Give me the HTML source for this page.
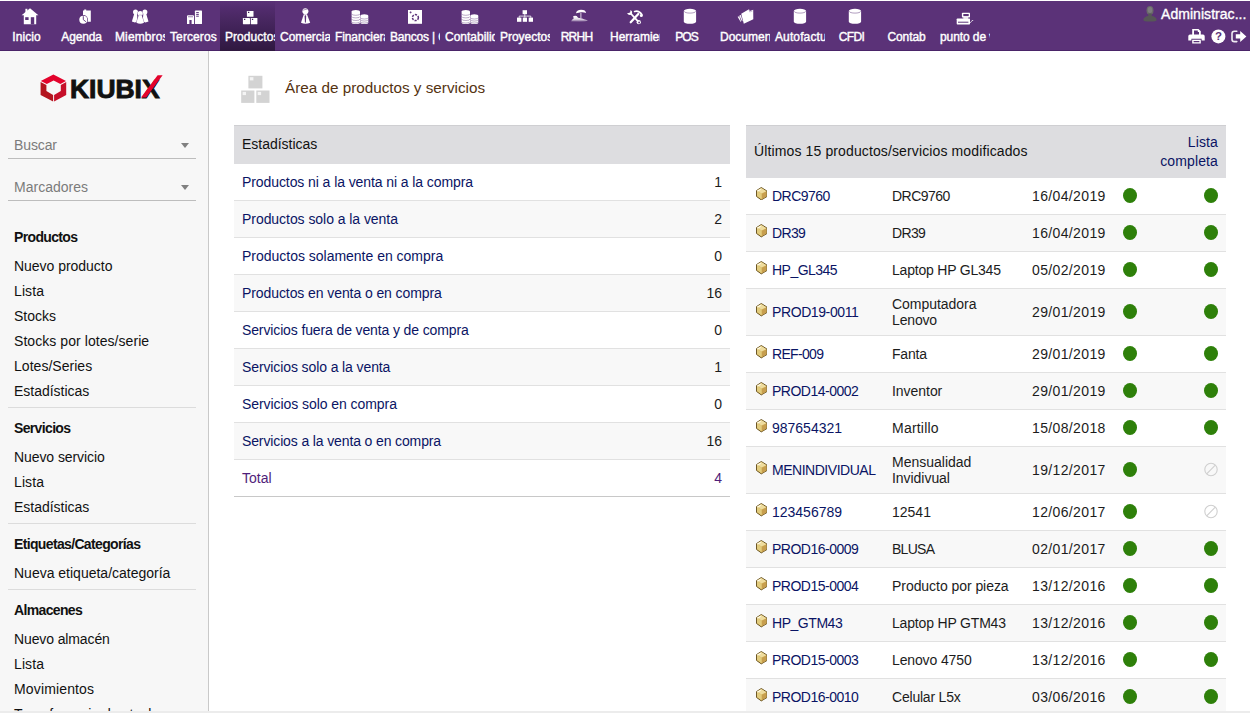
<!DOCTYPE html>
<html lang="es">
<head>
<meta charset="utf-8">
<title>Área de productos y servicios</title>
<style>
*{box-sizing:border-box}
html,body{margin:0;padding:0}
body{width:1250px;height:713px;overflow:hidden;background:#fff;position:relative;font-family:"Liberation Sans",sans-serif;font-size:14px;color:#1c1c1c}
a{text-decoration:none;color:#0a1464}
.ab{position:absolute}
#top{position:absolute;left:0;top:1px;width:1250px;height:50px;background:#5b3278;border-bottom:1px solid #4a2468}
#top ul{list-style:none;margin:0;padding:0;position:absolute;left:0;top:0;height:49px}
#top li{position:absolute;top:0;width:55px;height:50px;overflow:hidden}
#top li.sel{background:linear-gradient(#593076 0,#593076 2%,#522c6e 14%,#47265f 40%,#3b1f51 70%,#2f183f 100%)}
#top li svg{position:absolute;left:0;top:0}
#top li a{position:absolute;left:5px;top:28px;width:43px;height:16px;line-height:16px;font-size:12px;color:#fff;white-space:nowrap;text-align:center;-webkit-text-stroke:.4px #fff}
#login{position:absolute;left:1130px;top:0;width:120px;height:49px;color:#fff}
#login .usr{position:absolute;left:31px;top:4px;font-size:14px;line-height:18px;white-space:nowrap;color:#fff;-webkit-text-stroke:.35px #fff}
#side{position:absolute;left:0;top:51px;width:209px;height:660px;background:#f7f7f7;border-right:1px solid #c9c9c9;overflow:hidden}
#side .sel{position:absolute;left:8px;width:188px;height:30px;border-bottom:1px solid #bdbdbd;color:#7b7b7b;font-size:14px}
#side .sel span{position:absolute;left:6px;top:7px;line-height:18px}
#side .sel i{position:absolute;right:7px;top:14px;width:0;height:0;border-left:4px solid transparent;border-right:4px solid transparent;border-top:5px solid #808080}
#side .t,#side .i{position:absolute;left:14px;height:25px;line-height:25px;white-space:nowrap;color:#111}
#side .t{font-weight:bold;letter-spacing:-.65px;margin-top:1px}
#side .hr{position:absolute;left:8px;width:188px;height:1px;background:#dcdcdc}
#main{position:absolute;left:209px;top:51px;width:1041px;height:660px;overflow:hidden}
#foot{position:absolute;left:0;top:711px;width:1250px;height:2px;background:#ececec}
.tit{position:absolute;left:76px;top:27px;font-size:15.25px;line-height:20px;color:#553311;white-space:nowrap}
table{border-collapse:collapse;position:absolute;table-layout:fixed;border-bottom:1px solid #c8c8c8}
td,th{padding:0 8px;font-weight:normal;text-align:left;vertical-align:middle;font-size:14px;line-height:16px;white-space:nowrap;overflow:hidden}
tr{height:37px}
tr.tall{height:47px}
tr.h{background:#dddde0;height:38px}
tr.h th{color:#111;border-top:1px solid #cfcfd2}
#t1 tr.h th{padding-bottom:2px}
#t2 tr.h th:first-child{padding-bottom:2px}
#t2 tr.h{height:52px}
tbody tr{border-top:1px solid #e1e1e1}
tbody tr:nth-child(even){background:#f8f8f8}
tbody tr:first-child{border-top:none}
tr.tot td{color:#501e7a}
.r,.c5{text-align:right}
.c4{padding-left:10.5px}
.dot{display:inline-block;width:14px;height:15px;border-radius:50%;background:#2e800a;vertical-align:middle}
.off{display:inline-block;vertical-align:middle}
.dot,.off{position:relative;top:-1px}
.cube{display:inline-block;vertical-align:top;margin:-.7px 4.800px 0 1.800px}
#t2 th a{line-height:19px;display:inline-block}


</style>
</head>
<body>
<div id="top">
<ul id="menu">
<li style="left:0px"><svg viewBox="0 0 55 30" width="55" height="30" fill="#fff"><path d="M21.6 14.2 30 7.2l8.4 7h-2.2v9H23.8v-9z"/><rect x="25.4" y="7.8" width="2" height="4"/><rect x="25.2" y="16.2" width="3.4" height="2.8" fill="#5b3278"/><rect x="30.8" y="16.2" width="3.4" height="7.2" fill="#5b3278"/></svg><a href="#" style="letter-spacing:0.089px">Inicio</a></li>
<li style="left:55px"><svg viewBox="0 0 55 30" width="55" height="30" fill="#fff"><path d="M28 9.4h1.2v-.9h2v.9h4.6v11.3H28z"/><circle cx="28.3" cy="18.7" r="4.7" fill="#5b3278"/><circle cx="28.3" cy="18.7" r="4"/><path d="M28.3 15.2v3.5l2.6 2" stroke="#5b3278" stroke-width=".9" fill="none"/></svg><a href="#" style="letter-spacing:-0.158px">Agenda</a></li>
<li style="left:110px"><svg viewBox="0 0 55 30" width="55" height="30" fill="#fff"><circle cx="25.500" cy="10.900" r="2.500"/><path d="M24.300 12.500h2.700l.8 8.100q-2.900 1.600-5.900 0z"/><circle cx="34.900" cy="10.900" r="2.500"/><path d="M36.100 12.500h-2.700l-.8 8.100q2.900 1.600 5.900 0z"/><g stroke="#5b3278" stroke-width=".6" paint-order="stroke"><circle cx="30.200" cy="12.600" r="2.600"/><path d="M28.700 14.300h3l2.300 7.400q-3.800 2-7.600 0z"/></g></svg><a href="#" style="letter-spacing:0.109px">Miembros</a></li>
<li style="left:165px"><svg viewBox="0 0 55 30" width="55" height="30" fill="#fff"><path d="M22 15.3q0-1 1-1h5q1 0 1 1V23h-2.4v-4h-2.2v4H22z"/><rect x="23" y="15.2" width="5" height="1.1" fill="#5b3278" opacity=".55"/><rect x="29.9" y="9.6" width="7.1" height="13.4" rx=".6"/><path d="M31.2 11.6h2.6M31.2 13.4h2.6M31.2 15.2h2.6" stroke="#5b3278" stroke-width="1"/></svg><a href="#" style="letter-spacing:0.103px">Terceros</a></li>
<li class="sel" style="left:220px"><svg viewBox="0 0 55 30" width="55" height="30" fill="#fff"><rect x="26.9" y="10" width="6.6" height="5.8" rx=".4"/><rect x="22.9" y="17" width="7.1" height="6.2" rx=".4"/><rect x="30.8" y="17" width="6.6" height="6.2" rx=".4"/><path d="M28 11.4h1.3M24 18.4h1.3M31.9 18.4h1.3" stroke="#3f2156" stroke-width="1.1"/></svg><a href="#" style="letter-spacing:0.057px">Productos</a></li>
<li style="left:275px"><svg viewBox="0 0 55 30" width="55" height="30" fill="#fff"><circle cx="30.4" cy="10.2" r="3"/><path d="M27.6 9.2l5.4-1.3" stroke="#5b3278" stroke-width=".7" opacity=".7"/><path d="M28.8 13.2h3.2l3.2 8.6q-4.8 2-9.2 0z"/><path d="M30.4 14l.8 1-.3 6-.5 1-.5-1-.3-6z" fill="#5b3278"/></svg><a href="#" style="letter-spacing:-0.037px">Comercial</a></li>
<li style="left:330px"><svg viewBox="0 0 55 30" width="55" height="30" fill="#fff"><path d="M21.6 10.6a4.199999999999999 1.6 0 0 1 8.399999999999999 0V21.400000000000002a4.199999999999999 1.5 0 0 1-8.399999999999999 0z"/><path d="M21.6 12.799999999999999a4.199999999999999 1.5 0 0 0 8.399999999999999 0" stroke="#5b3278" stroke-width=".55" fill="none" opacity=".75"/><path d="M21.6 15.4a4.199999999999999 1.5 0 0 0 8.399999999999999 0" stroke="#5b3278" stroke-width=".55" fill="none" opacity=".75"/><path d="M21.6 18.0a4.199999999999999 1.5 0 0 0 8.399999999999999 0" stroke="#5b3278" stroke-width=".55" fill="none" opacity=".75"/><path d="M21.6 20.6a4.199999999999999 1.5 0 0 0 8.399999999999999 0" stroke="#5b3278" stroke-width=".55" fill="none" opacity=".75"/><path d="M30.3 14.9a3.9999999999999982 1.6 0 0 1 7.9999999999999964 0V21.400000000000002a3.9999999999999982 1.5 0 0 1-7.9999999999999964 0z"/><path d="M30.3 16.53333333333333a3.9999999999999982 1.5 0 0 0 7.9999999999999964 0" stroke="#5b3278" stroke-width=".55" fill="none" opacity=".75"/><path d="M30.3 18.566666666666666a3.9999999999999982 1.5 0 0 0 7.9999999999999964 0" stroke="#5b3278" stroke-width=".55" fill="none" opacity=".75"/><path d="M30.3 20.6a3.9999999999999982 1.5 0 0 0 7.9999999999999964 0" stroke="#5b3278" stroke-width=".55" fill="none" opacity=".75"/></svg><a href="#" style="letter-spacing:-0.113px">Financiera</a></li>
<li style="left:385px"><svg viewBox="0 0 55 30" width="55" height="30" fill="#fff"><rect x="23" y="9" width="14" height="13.8"/><circle cx="30.4" cy="16.6" r="3" fill="none" stroke="#5b3278" stroke-width="1.5" stroke-dasharray="2.2 1.1"/><path d="M24.6 11.4h2M25.6 10.4v2" stroke="#5b3278" stroke-width=".8"/></svg><a href="#" style="letter-spacing:-0.183px">Bancos | Cajas</a></li>
<li style="left:440px"><svg viewBox="0 0 55 30" width="55" height="30" fill="#fff"><path d="M21.6 10.6a4.199999999999999 1.6 0 0 1 8.399999999999999 0V21.400000000000002a4.199999999999999 1.5 0 0 1-8.399999999999999 0z"/><path d="M21.6 12.799999999999999a4.199999999999999 1.5 0 0 0 8.399999999999999 0" stroke="#5b3278" stroke-width=".55" fill="none" opacity=".75"/><path d="M21.6 15.4a4.199999999999999 1.5 0 0 0 8.399999999999999 0" stroke="#5b3278" stroke-width=".55" fill="none" opacity=".75"/><path d="M21.6 18.0a4.199999999999999 1.5 0 0 0 8.399999999999999 0" stroke="#5b3278" stroke-width=".55" fill="none" opacity=".75"/><path d="M21.6 20.6a4.199999999999999 1.5 0 0 0 8.399999999999999 0" stroke="#5b3278" stroke-width=".55" fill="none" opacity=".75"/><path d="M30.3 14.9a3.9999999999999982 1.6 0 0 1 7.9999999999999964 0V21.400000000000002a3.9999999999999982 1.5 0 0 1-7.9999999999999964 0z"/><path d="M30.3 16.53333333333333a3.9999999999999982 1.5 0 0 0 7.9999999999999964 0" stroke="#5b3278" stroke-width=".55" fill="none" opacity=".75"/><path d="M30.3 18.566666666666666a3.9999999999999982 1.5 0 0 0 7.9999999999999964 0" stroke="#5b3278" stroke-width=".55" fill="none" opacity=".75"/><path d="M30.3 20.6a3.9999999999999982 1.5 0 0 0 7.9999999999999964 0" stroke="#5b3278" stroke-width=".55" fill="none" opacity=".75"/></svg><a href="#" style="letter-spacing:-0.011px">Contabilidad</a></li>
<li style="left:495px"><svg viewBox="0 0 55 30" width="55" height="30" fill="#fff"><rect x="27.6" y="9.2" width="4.4" height="4"/><rect x="22" y="16.6" width="4.4" height="4.2"/><rect x="27.8" y="16.6" width="4.2" height="4.2"/><rect x="33.7" y="16.6" width="4.3" height="4.2"/><path d="M29.8 13v3.6M24.2 16.8v-1.7h11.6v1.7" stroke="#fff" stroke-width=".9" fill="none" opacity=".9"/></svg><a href="#" style="letter-spacing:-0.017px">Proyectos</a></li>
<li style="left:550px"><svg viewBox="0 0 55 30" width="55" height="30" fill="#fff"><defs><linearGradient id="sg" x1="0" y1="0" x2="0" y2="1"><stop offset="0" stop-color="#fff"/><stop offset=".55" stop-color="#fff" stop-opacity=".85"/><stop offset="1" stop-color="#fff" stop-opacity=".15"/></linearGradient></defs><path d="M26 12.3q.4-3.6 5.1-3.6t5 3.4q-2.4-1.2-5-.9t-5.1 1.100z"/><path d="M30.9 11.8v5.4" stroke="#fff" stroke-width=".8"/><path d="M21 20.600q.8-2.400 2.700-3.200l-.600-2.100q1.500-.8 3.600-.2l1.400 1.700q4.600.4 6.700 1.700 2 .2 3.100 1.300-1.900.8-8.400 1z" fill="url(#sg)"/></svg><a href="#" style="letter-spacing:-0.774px">RRHH</a></li>
<li style="left:605px"><svg viewBox="0 0 55 30" width="55" height="30" fill="#fff"><g stroke="#fff" fill="none" stroke-linecap="round"><path d="M25.700 21.300 33.300 13" stroke-width="2.200"/><path d="M26.200 13 33 20.300" stroke-width="1.800"/><path d="M29.600 10.500q4.200-1.300 7.200 3" stroke-width="1.700"/></g><circle cx="36.300" cy="14.600" r="1.500"/><circle cx="33.800" cy="21.200" r="2.100"/><circle cx="34.100" cy="21.500" r=".9" fill="#5b3278"/><path d="M22 12.300q1.400 2.300 3.800 1.500l1.400-1.600q.2-2.100-1.600-3.100l-.5 2.300-1.500.5z"/></svg><a href="#" style="letter-spacing:-0.012px">Herramientas</a></li>
<li style="left:660px"><svg viewBox="0 0 55 30" width="55" height="30" fill="#fff"><path d="M23.800 10a6.150 2.200 0 0 1 12.300 0V20.700a6.150 2.100 0 0 1-12.300 0z"/><path d="M24.300 10.400a5.650 1.700 0 0 0 11.300 0" stroke="#5b3278" stroke-width=".6" fill="none" opacity=".8"/></svg><a href="#" style="letter-spacing:-0.877px">POS</a></li>
<li style="left:715px"><svg viewBox="0 0 55 30" width="55" height="30" fill="#fff"><path d="M26.200 12.800l7.800-4.600.9 1.700 3.300-1.200.1 9.500-9.500 4.500z"/><path d="M22.600 15.800l1.700-.6 1.800 5.300-.6.200zM24.300 14.600l1.600-.6 1.700 6-.7.300z" opacity=".95"/><path d="M34 8.400l.7 2.600 2.800-1" stroke="#5b3278" stroke-width=".5" fill="none" opacity=".6"/></svg><a href="#" style="letter-spacing:0.001px">Documentos</a></li>
<li style="left:770px"><svg viewBox="0 0 55 30" width="55" height="30" fill="#fff"><path d="M23.800 10a6.150 2.200 0 0 1 12.300 0V20.700a6.150 2.100 0 0 1-12.300 0z"/><path d="M24.300 10.400a5.650 1.700 0 0 0 11.300 0" stroke="#5b3278" stroke-width=".6" fill="none" opacity=".8"/></svg><a href="#" style="letter-spacing:0.118px">Autofactura</a></li>
<li style="left:825px"><svg viewBox="0 0 55 30" width="55" height="30" fill="#fff"><path d="M23.800 10a6.150 2.200 0 0 1 12.300 0V20.700a6.150 2.100 0 0 1-12.300 0z"/><path d="M24.300 10.400a5.650 1.700 0 0 0 11.300 0" stroke="#5b3278" stroke-width=".6" fill="none" opacity=".8"/></svg><a href="#" style="letter-spacing:-0.669px">CFDI</a></li>
<li style="left:880px"><a href="#" style="letter-spacing:-0.104px">Contab</a></li>
<li style="left:935px"><svg viewBox="0 0 55 30" width="55" height="30" fill="#fff"><rect x="26.900" y="11.800" width="8.100" height="4.600" rx=".7"/><rect x="28.300" y="13" width="5.400" height="2.100" fill="#5b3278"/><rect x="28.300" y="16.200" width="4.800" height="1.600"/><rect x="21.700" y="17.500" width="13.300" height="6" rx=".7"/><rect x="23" y="20.700" width="10.400" height="1" fill="#5b3278"/><path d="M35 21.500q1.100 0 1.500-1l.5-1h1.200" stroke="#fff" stroke-width=".7" fill="none"/></svg><a href="#" style="letter-spacing:-0.082px">punto de venta</a></li>
</ul>
<div id="login"><svg class="ab" style="left:12px;top:4px" width="16" height="18" viewBox="0 0 16 18"><ellipse cx="8" cy="5.400" rx="3.500" ry="4.300" fill="#6a6a6a"/><path d="M6.300 8.500h3.400v2.300q4.900 1.300 4.900 4.100 0 1.700-6.600 1.700T1.400 14.900q0-2.800 4.900-4.100z" fill="#575757"/><ellipse cx="8" cy="5" rx="2.300" ry="3" fill="#7d7d7d"/></svg><a class="usr" href="#" style="letter-spacing:0.049px">Administrac...</a><svg class="ab" style="left:58px;top:28px" width="17" height="15" viewBox="0 0 17 15" fill="#fff"><path d="M4.200 0h6.300l2.300 2.300V6H11V3H9.800V1.400H6V6H4.200z"/><path d="M2 5.600h13q1.700 0 1.700 1.700v4.200H13.600V9.700H3.400v1.800H.3V7.300q0-1.700 1.700-1.700z"/><path d="M4.200 10.800h8.600v3.700H4.200zm1.400 1.200v1.300h5.800V12z" fill-rule="evenodd"/></svg><svg class="ab" style="left:81px;top:28px" width="15" height="15" viewBox="0 0 15 15"><circle cx="7.400" cy="7.400" r="7" fill="#fff"/><text x="7.400" y="11.400" text-anchor="middle" font-family="Liberation Sans,sans-serif" font-weight="bold" font-size="11.500" fill="#5b3278">?</text></svg><svg class="ab" style="left:101px;top:29px" width="16" height="13" viewBox="0 0 16 13"><path d="M5.800 1.200H3.400Q1 1.200 1 3.600v5.600q0 2.400 2.400 2.400h2.400" fill="none" stroke="#fff" stroke-width="1.600" stroke-linecap="round" opacity=".9"/><path d="M4.800 4.300h4.400V.9l6.200 5.500-6.200 5.500V8.500H4.800z" fill="#fff"/></svg></div>
</div>
<div id="side">
<svg class="ab" style="left:36px;top:18px" width="132" height="38" viewBox="36 69 132 38">
<path d="M40.800 81.100 53.400 74.500 66 81.100 60.400 84.100 53.600 80.600 46.800 84.100z" fill="#e3032c"/>
<path d="M40.600 82.100 46.400 85.100V91.100l6.700 3.900v6.600L40.600 95z" fill="#b3151f"/>
<path d="M66.200 82.100 60.800 85.100V91.100l-6.700 3.900v6.600L66.200 95z" fill="#c60f29"/>
<text x="70" y="97.600" font-family="Liberation Sans,sans-serif" font-weight="bold" font-size="25.400" textLength="89.600" lengthAdjust="spacingAndGlyphs" fill="#111" stroke="#111" stroke-width=".9" stroke-linejoin="miter">KIUBIX</text>
<path d="M141 97.600h5.200L162.600 75.200h-5z" fill="#e3032c"/>
</svg>
<div class="sel" style="top:78px"><span style="letter-spacing:-0.112px">Buscar</span><i></i></div>
<div class="sel" style="top:120px"><span style="letter-spacing:0.011px">Marcadores</span><i></i></div>
<div class="t" style="top:173px">Productos</div>
<a class="i" href="#" style="top:203px;letter-spacing:-0.03px">Nuevo producto</a>
<a class="i" href="#" style="top:228px;letter-spacing:0.092px">Lista</a>
<a class="i" href="#" style="top:253px;letter-spacing:0.011px">Stocks</a>
<a class="i" href="#" style="top:278px;letter-spacing:0.062px">Stocks por lotes/serie</a>
<a class="i" href="#" style="top:303px;letter-spacing:0.032px">Lotes/Series</a>
<a class="i" href="#" style="top:328px;letter-spacing:-0.019px">Estadísticas</a>
<div class="hr" style="top:356px"></div>
<div class="t" style="top:364px">Servicios</div>
<a class="i" href="#" style="top:394px;letter-spacing:-0.08px">Nuevo servicio</a>
<a class="i" href="#" style="top:419px;letter-spacing:0.092px">Lista</a>
<a class="i" href="#" style="top:444px;letter-spacing:-0.019px">Estadísticas</a>
<div class="hr" style="top:472px"></div>
<div class="t" style="top:480px">Etiquetas/Categorías</div>
<a class="i" href="#" style="top:510px;letter-spacing:-0.003px">Nueva etiqueta/categoría</a>
<div class="hr" style="top:538px"></div>
<div class="t" style="top:546px">Almacenes</div>
<a class="i" href="#" style="top:576px;letter-spacing:-0.118px">Nuevo almacén</a>
<a class="i" href="#" style="top:601px;letter-spacing:0.092px">Lista</a>
<a class="i" href="#" style="top:626px;letter-spacing:0.144px">Movimientos</a>
<a class="i" href="#" style="top:651px;letter-spacing:0.003px">Transferencia de stock</a>
</div>
<div id="main">
<svg class="ab" style="left:31px;top:24px" width="30" height="29" viewBox="240 75 30 29"><g fill="#d3d3d3"><rect x="248.400" y="75.800" width="14" height="12.600"/><rect x="241.200" y="90.500" width="13.200" height="12.400"/><rect x="256.300" y="90.500" width="13.200" height="12.400"/></g><g fill="#f4f4f4"><rect x="249.800" y="77.200" width="3.600" height="3.200"/><rect x="242.600" y="91.900" width="3.400" height="3.200"/><rect x="257.700" y="91.900" width="3.400" height="3.200"/></g></svg>
<div class="tit" style="{L("Área de productos y servicios",15.25,1.0)}">Área de productos y servicios</div>
<table id="t1" style="left:25px;top:74px;width:496px"><colgroup><col><col style="width:60px"></colgroup><thead><tr class="h"><th colspan="2" style="letter-spacing:-0.019px">Estadísticas</th></tr></thead><tbody><tr><td><a href="#" style="letter-spacing:-0.084px">Productos ni a la venta ni a la compra</a></td><td class="r">1</td></tr><tr><td><a href="#" style="letter-spacing:-0.053px">Productos solo a la venta</a></td><td class="r">2</td></tr><tr><td><a href="#" style="letter-spacing:-0.013px">Productos solamente en compra</a></td><td class="r">0</td></tr><tr><td><a href="#" style="letter-spacing:-0.086px">Productos en venta o en compra</a></td><td class="r">16</td></tr><tr><td><a href="#" style="letter-spacing:-0.126px">Servicios fuera de venta y de compra</a></td><td class="r">0</td></tr><tr><td><a href="#" style="letter-spacing:-0.108px">Servicios solo a la venta</a></td><td class="r">1</td></tr><tr><td><a href="#" style="letter-spacing:-0.062px">Servicios solo en compra</a></td><td class="r">0</td></tr><tr><td><a href="#" style="letter-spacing:-0.128px">Servicios a la venta o en compra</a></td><td class="r">16</td></tr><tr class="tot"><td>Total</td><td class="r">4</td></tr></tbody></table>
<table id="t2" style="left:537px;top:74px;width:480px"><colgroup><col style="width:138px"><col style="width:140px"><col style="width:88px"><col style="width:34px"><col></colgroup><thead><tr class="h"><th colspan="4" style="letter-spacing:0.124px">Últimos 15 productos/servicios modificados</th><th class="r"><a href="#" style="letter-spacing:0.131px">Lista<br>completa</a></th></tr></thead><tbody><tr><td class="c1"><svg class="cube" width="11.400" height="13.400" viewBox="0 0 11.400 13.400"><path d="M5.300.5 10.900 4V9.600L5.300 12.900.5 9.400V3.600z" fill="#d8b860" stroke="#5e4716" stroke-width=".9" stroke-linejoin="round"/><path d="M1 3.800 5.300 1l5.100 3.200-4.800 2.300z" fill="#eedc9e"/><path d="M1 4.200 5.600 6.800v5.500L1 9.100z" fill="#e2cc7e"/><path d="M10.400 4.400 5.900 6.800v5.400l4.500-2.800z" fill="#c79e4e"/><path d="M1.600 3.900 4.300 2.400" stroke="#fffbe6" stroke-width="1.100" stroke-linecap="round"/></svg><a href="#" style="letter-spacing:-0.529px">DRC9760</a></td><td class="c2"><span style="letter-spacing:-0.529px">DRC9760</span></td><td class="c3" style="letter-spacing:0.362px">16/04/2019</td><td class="c4"><span class="dot"></span></td><td class="c5"><span class="dot"></span></td></tr><tr><td class="c1"><svg class="cube" width="11.400" height="13.400" viewBox="0 0 11.400 13.400"><path d="M5.300.5 10.900 4V9.600L5.300 12.900.5 9.400V3.600z" fill="#d8b860" stroke="#5e4716" stroke-width=".9" stroke-linejoin="round"/><path d="M1 3.800 5.300 1l5.100 3.200-4.800 2.300z" fill="#eedc9e"/><path d="M1 4.200 5.600 6.800v5.500L1 9.100z" fill="#e2cc7e"/><path d="M10.400 4.400 5.900 6.800v5.400l4.500-2.800z" fill="#c79e4e"/><path d="M1.600 3.900 4.300 2.400" stroke="#fffbe6" stroke-width="1.100" stroke-linecap="round"/></svg><a href="#" style="letter-spacing:-0.651px">DR39</a></td><td class="c2"><span style="letter-spacing:-0.651px">DR39</span></td><td class="c3" style="letter-spacing:0.362px">16/04/2019</td><td class="c4"><span class="dot"></span></td><td class="c5"><span class="dot"></span></td></tr><tr><td class="c1"><svg class="cube" width="11.400" height="13.400" viewBox="0 0 11.400 13.400"><path d="M5.300.5 10.900 4V9.600L5.300 12.900.5 9.400V3.600z" fill="#d8b860" stroke="#5e4716" stroke-width=".9" stroke-linejoin="round"/><path d="M1 3.800 5.300 1l5.100 3.200-4.800 2.300z" fill="#eedc9e"/><path d="M1 4.200 5.600 6.800v5.500L1 9.100z" fill="#e2cc7e"/><path d="M10.400 4.400 5.900 6.800v5.400l4.500-2.800z" fill="#c79e4e"/><path d="M1.600 3.900 4.300 2.400" stroke="#fffbe6" stroke-width="1.100" stroke-linecap="round"/></svg><a href="#" style="letter-spacing:-0.518px">HP_GL345</a></td><td class="c2"><span style="letter-spacing:-0.208px">Laptop HP GL345</span></td><td class="c3" style="letter-spacing:0.362px">05/02/2019</td><td class="c4"><span class="dot"></span></td><td class="c5"><span class="dot"></span></td></tr><tr class="tall"><td class="c1"><svg class="cube" width="11.400" height="13.400" viewBox="0 0 11.400 13.400"><path d="M5.300.5 10.900 4V9.600L5.300 12.900.5 9.400V3.600z" fill="#d8b860" stroke="#5e4716" stroke-width=".9" stroke-linejoin="round"/><path d="M1 3.800 5.300 1l5.100 3.200-4.800 2.300z" fill="#eedc9e"/><path d="M1 4.200 5.600 6.800v5.500L1 9.100z" fill="#e2cc7e"/><path d="M10.400 4.400 5.900 6.800v5.400l4.500-2.800z" fill="#c79e4e"/><path d="M1.600 3.900 4.300 2.400" stroke="#fffbe6" stroke-width="1.100" stroke-linecap="round"/></svg><a href="#" style="letter-spacing:-0.398px">PROD19-0011</a></td><td class="c2"><span style="letter-spacing:-0.029px">Computadora</span><br><span style="letter-spacing:-0.16px">Lenovo</span></td><td class="c3" style="letter-spacing:0.362px">29/01/2019</td><td class="c4"><span class="dot"></span></td><td class="c5"><span class="dot"></span></td></tr><tr><td class="c1"><svg class="cube" width="11.400" height="13.400" viewBox="0 0 11.400 13.400"><path d="M5.300.5 10.900 4V9.600L5.300 12.900.5 9.400V3.600z" fill="#d8b860" stroke="#5e4716" stroke-width=".9" stroke-linejoin="round"/><path d="M1 3.800 5.300 1l5.100 3.200-4.800 2.300z" fill="#eedc9e"/><path d="M1 4.200 5.600 6.800v5.500L1 9.100z" fill="#e2cc7e"/><path d="M10.400 4.400 5.900 6.800v5.400l4.500-2.800z" fill="#c79e4e"/><path d="M1.600 3.900 4.300 2.400" stroke="#fffbe6" stroke-width="1.100" stroke-linecap="round"/></svg><a href="#" style="letter-spacing:-0.682px">REF-009</a></td><td class="c2"><span style="letter-spacing:-0.177px">Fanta</span></td><td class="c3" style="letter-spacing:0.362px">29/01/2019</td><td class="c4"><span class="dot"></span></td><td class="c5"><span class="dot"></span></td></tr><tr><td class="c1"><svg class="cube" width="11.400" height="13.400" viewBox="0 0 11.400 13.400"><path d="M5.300.5 10.900 4V9.600L5.300 12.900.5 9.400V3.600z" fill="#d8b860" stroke="#5e4716" stroke-width=".9" stroke-linejoin="round"/><path d="M1 3.800 5.300 1l5.100 3.200-4.800 2.300z" fill="#eedc9e"/><path d="M1 4.200 5.600 6.800v5.500L1 9.100z" fill="#e2cc7e"/><path d="M10.400 4.400 5.900 6.800v5.400l4.500-2.800z" fill="#c79e4e"/><path d="M1.600 3.900 4.300 2.400" stroke="#fffbe6" stroke-width="1.100" stroke-linecap="round"/></svg><a href="#" style="letter-spacing:-0.492px">PROD14-0002</a></td><td class="c2"><span style="letter-spacing:-0.043px">Inventor</span></td><td class="c3" style="letter-spacing:0.362px">29/01/2019</td><td class="c4"><span class="dot"></span></td><td class="c5"><span class="dot"></span></td></tr><tr><td class="c1"><svg class="cube" width="11.400" height="13.400" viewBox="0 0 11.400 13.400"><path d="M5.300.5 10.900 4V9.600L5.300 12.900.5 9.400V3.600z" fill="#d8b860" stroke="#5e4716" stroke-width=".9" stroke-linejoin="round"/><path d="M1 3.800 5.300 1l5.100 3.200-4.800 2.300z" fill="#eedc9e"/><path d="M1 4.200 5.600 6.800v5.500L1 9.100z" fill="#e2cc7e"/><path d="M10.400 4.400 5.900 6.800v5.400l4.500-2.800z" fill="#c79e4e"/><path d="M1.600 3.900 4.300 2.400" stroke="#fffbe6" stroke-width="1.100" stroke-linecap="round"/></svg><a href="#" style="letter-spacing:-0.003px">987654321</a></td><td class="c2"><span style="letter-spacing:0.217px">Martillo</span></td><td class="c3" style="letter-spacing:0.362px">15/08/2018</td><td class="c4"><span class="dot"></span></td><td class="c5"><span class="dot"></span></td></tr><tr class="tall"><td class="c1"><svg class="cube" width="11.400" height="13.400" viewBox="0 0 11.400 13.400"><path d="M5.300.5 10.900 4V9.600L5.300 12.900.5 9.400V3.600z" fill="#d8b860" stroke="#5e4716" stroke-width=".9" stroke-linejoin="round"/><path d="M1 3.800 5.300 1l5.100 3.200-4.800 2.300z" fill="#eedc9e"/><path d="M1 4.200 5.600 6.800v5.500L1 9.100z" fill="#e2cc7e"/><path d="M10.400 4.400 5.900 6.800v5.400l4.500-2.800z" fill="#c79e4e"/><path d="M1.600 3.900 4.300 2.400" stroke="#fffbe6" stroke-width="1.100" stroke-linecap="round"/></svg><a href="#" style="letter-spacing:-0.473px">MENINDIVIDUAL</a></td><td class="c2"><span style="letter-spacing:-0.006px">Mensualidad</span><br><span style="letter-spacing:-0.043px">Invidivual</span></td><td class="c3" style="letter-spacing:0.362px">19/12/2017</td><td class="c4"><span class="dot"></span></td><td class="c5"><svg class="off" width="14" height="15" viewBox="0 0 14 15"><circle cx="7" cy="7.500" r="6.200" fill="none" stroke="#cfcfcf" stroke-width="1.100"/><path d="M2.700 11.900 11.300 3.100" stroke="#cfcfcf" stroke-width="1.100"/></svg></td></tr><tr><td class="c1"><svg class="cube" width="11.400" height="13.400" viewBox="0 0 11.400 13.400"><path d="M5.300.5 10.900 4V9.600L5.300 12.900.5 9.400V3.600z" fill="#d8b860" stroke="#5e4716" stroke-width=".9" stroke-linejoin="round"/><path d="M1 3.800 5.300 1l5.100 3.200-4.800 2.300z" fill="#eedc9e"/><path d="M1 4.200 5.600 6.800v5.500L1 9.100z" fill="#e2cc7e"/><path d="M10.400 4.400 5.900 6.800v5.400l4.500-2.800z" fill="#c79e4e"/><path d="M1.600 3.900 4.300 2.400" stroke="#fffbe6" stroke-width="1.100" stroke-linecap="round"/></svg><a href="#" style="letter-spacing:-0.003px">123456789</a></td><td class="c2"><span style="letter-spacing:-0.003px">12541</span></td><td class="c3" style="letter-spacing:0.362px">12/06/2017</td><td class="c4"><span class="dot"></span></td><td class="c5"><svg class="off" width="14" height="15" viewBox="0 0 14 15"><circle cx="7" cy="7.500" r="6.200" fill="none" stroke="#cfcfcf" stroke-width="1.100"/><path d="M2.700 11.900 11.300 3.100" stroke="#cfcfcf" stroke-width="1.100"/></svg></td></tr><tr><td class="c1"><svg class="cube" width="11.400" height="13.400" viewBox="0 0 11.400 13.400"><path d="M5.300.5 10.900 4V9.600L5.300 12.900.5 9.400V3.600z" fill="#d8b860" stroke="#5e4716" stroke-width=".9" stroke-linejoin="round"/><path d="M1 3.800 5.300 1l5.100 3.200-4.800 2.300z" fill="#eedc9e"/><path d="M1 4.200 5.600 6.800v5.500L1 9.100z" fill="#e2cc7e"/><path d="M10.400 4.400 5.900 6.800v5.400l4.500-2.800z" fill="#c79e4e"/><path d="M1.600 3.900 4.300 2.400" stroke="#fffbe6" stroke-width="1.100" stroke-linecap="round"/></svg><a href="#" style="letter-spacing:-0.492px">PROD16-0009</a></td><td class="c2"><span style="letter-spacing:-0.714px">BLUSA</span></td><td class="c3" style="letter-spacing:0.362px">02/01/2017</td><td class="c4"><span class="dot"></span></td><td class="c5"><span class="dot"></span></td></tr><tr><td class="c1"><svg class="cube" width="11.400" height="13.400" viewBox="0 0 11.400 13.400"><path d="M5.300.5 10.900 4V9.600L5.300 12.900.5 9.400V3.600z" fill="#d8b860" stroke="#5e4716" stroke-width=".9" stroke-linejoin="round"/><path d="M1 3.800 5.300 1l5.100 3.200-4.800 2.300z" fill="#eedc9e"/><path d="M1 4.200 5.600 6.800v5.500L1 9.100z" fill="#e2cc7e"/><path d="M10.400 4.400 5.900 6.800v5.400l4.500-2.800z" fill="#c79e4e"/><path d="M1.600 3.900 4.300 2.400" stroke="#fffbe6" stroke-width="1.100" stroke-linecap="round"/></svg><a href="#" style="letter-spacing:-0.492px">PROD15-0004</a></td><td class="c2"><span style="letter-spacing:-0.051px">Producto por pieza</span></td><td class="c3" style="letter-spacing:0.362px">13/12/2016</td><td class="c4"><span class="dot"></span></td><td class="c5"><span class="dot"></span></td></tr><tr><td class="c1"><svg class="cube" width="11.400" height="13.400" viewBox="0 0 11.400 13.400"><path d="M5.300.5 10.900 4V9.600L5.300 12.900.5 9.400V3.600z" fill="#d8b860" stroke="#5e4716" stroke-width=".9" stroke-linejoin="round"/><path d="M1 3.800 5.300 1l5.100 3.200-4.800 2.300z" fill="#eedc9e"/><path d="M1 4.200 5.600 6.800v5.500L1 9.100z" fill="#e2cc7e"/><path d="M10.400 4.400 5.900 6.800v5.400l4.500-2.800z" fill="#c79e4e"/><path d="M1.600 3.900 4.300 2.400" stroke="#fffbe6" stroke-width="1.100" stroke-linecap="round"/></svg><a href="#" style="letter-spacing:-0.457px">HP_GTM43</a></td><td class="c2"><span style="letter-spacing:-0.175px">Laptop HP GTM43</span></td><td class="c3" style="letter-spacing:0.362px">13/12/2016</td><td class="c4"><span class="dot"></span></td><td class="c5"><span class="dot"></span></td></tr><tr><td class="c1"><svg class="cube" width="11.400" height="13.400" viewBox="0 0 11.400 13.400"><path d="M5.300.5 10.900 4V9.600L5.300 12.900.5 9.400V3.600z" fill="#d8b860" stroke="#5e4716" stroke-width=".9" stroke-linejoin="round"/><path d="M1 3.800 5.300 1l5.100 3.200-4.800 2.300z" fill="#eedc9e"/><path d="M1 4.200 5.600 6.800v5.500L1 9.100z" fill="#e2cc7e"/><path d="M10.400 4.400 5.900 6.800v5.400l4.500-2.800z" fill="#c79e4e"/><path d="M1.600 3.900 4.300 2.400" stroke="#fffbe6" stroke-width="1.100" stroke-linecap="round"/></svg><a href="#" style="letter-spacing:-0.492px">PROD15-0003</a></td><td class="c2"><span style="letter-spacing:-0.13px">Lenovo 4750</span></td><td class="c3" style="letter-spacing:0.362px">13/12/2016</td><td class="c4"><span class="dot"></span></td><td class="c5"><span class="dot"></span></td></tr><tr><td class="c1"><svg class="cube" width="11.400" height="13.400" viewBox="0 0 11.400 13.400"><path d="M5.300.5 10.900 4V9.600L5.300 12.900.5 9.400V3.600z" fill="#d8b860" stroke="#5e4716" stroke-width=".9" stroke-linejoin="round"/><path d="M1 3.800 5.300 1l5.100 3.200-4.800 2.300z" fill="#eedc9e"/><path d="M1 4.200 5.600 6.800v5.500L1 9.100z" fill="#e2cc7e"/><path d="M10.400 4.400 5.900 6.800v5.400l4.500-2.800z" fill="#c79e4e"/><path d="M1.600 3.900 4.300 2.400" stroke="#fffbe6" stroke-width="1.100" stroke-linecap="round"/></svg><a href="#" style="letter-spacing:-0.492px">PROD16-0010</a></td><td class="c2"><span style="letter-spacing:-0.21px">Celular L5x</span></td><td class="c3" style="letter-spacing:0.362px">03/06/2016</td><td class="c4"><span class="dot"></span></td><td class="c5"><span class="dot"></span></td></tr></tbody></table>
</div>
<div id="foot"></div>
</body>
</html>
